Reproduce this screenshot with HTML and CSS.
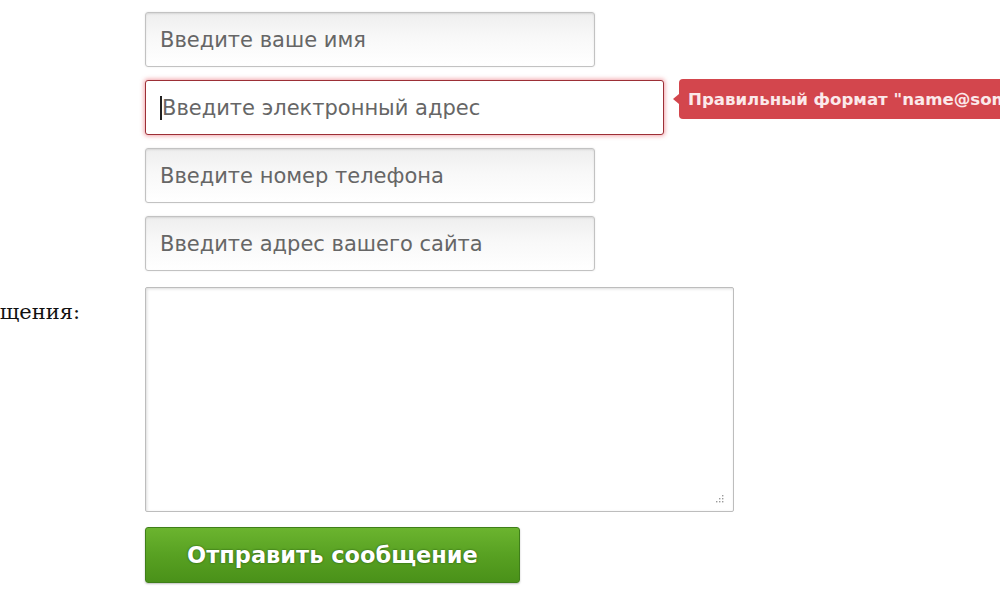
FILE: index.html
```html
<!DOCTYPE html>
<html lang="ru">
<head>
<meta charset="utf-8">
<title>Форма</title>
<link rel="stylesheet" href="styles.css">
</head>
<body>
<form class="form">
  <div class="row">
    <div class="label"></div>
    <div class="field"><input class="input w450" type="text" placeholder="Введите ваше имя"></div>
  </div>
  <div class="row">
    <div class="label"></div>
    <div class="field">
      <div class="input w519 error"><span class="caret"></span><span class="ph">Введите электронный адрес</span></div>
      <div class="tip">Правильный формат "name@something.com"</div>
    </div>
  </div>
  <div class="row">
    <div class="label"></div>
    <div class="field"><input class="input w450" type="text" placeholder="Введите номер телефона"></div>
  </div>
  <div class="row">
    <div class="label"></div>
    <div class="field"><input class="input w450" type="text" placeholder="Введите адрес вашего сайта"></div>
  </div>
  <div class="row row-text">
    <div class="label label-text"><span>Текст сообщения:</span></div>
    <div class="field field-area">
      <textarea class="area"></textarea>
      <svg class="grip" width="9" height="9" viewBox="0 0 9 9" aria-hidden="true">
        <rect x="7" y="1" width="1.4" height="1.4" fill="#9a9a9a"/>
        <rect x="4" y="4" width="1.4" height="1.4" fill="#9a9a9a"/>
        <rect x="7" y="4" width="1.4" height="1.4" fill="#9a9a9a"/>
        <rect x="1" y="7" width="1.4" height="1.4" fill="#9a9a9a"/>
        <rect x="4" y="7" width="1.4" height="1.4" fill="#9a9a9a"/>
        <rect x="7" y="7" width="1.4" height="1.4" fill="#9a9a9a"/>
      </svg>
    </div>
  </div>
  <div class="row row-btn">
    <div class="label"></div>
    <div class="field"><button class="btn" type="button">Отправить сообщение</button></div>
  </div>
</form>
</body>
</html>
```
FILE: styles.css
```css
html, body {
  margin: 0;
  padding: 0;
  background: #ffffff;
  overflow: hidden;
}
.form {
  display: flex;
  flex-direction: column;
  gap: 13px;
  padding-top: 12px;
  width: 1000px;
  height: 600px;
  box-sizing: border-box;
  overflow: hidden;
}
.row {
  display: grid;
  grid-template-columns: 145px 1fr;
}
.row-text { margin-top: 3px; }
.row-btn { margin-top: 2px; }
.label {
  display: flex;
  justify-content: flex-end;
  padding-right: 65px;
  white-space: nowrap;
  font-family: "DejaVu Serif", "Liberation Serif", serif;
  font-size: 21px;
  color: #111;
}
.label-text { padding-top: 13px; align-items: flex-start; }
.field {
  display: flex;
  align-items: center;
  position: relative;
}
.field-area { align-items: flex-start; }
.input {
  box-sizing: border-box;
  height: 55px;
  border: 1px solid #c2c2c2;
  border-radius: 3px;
  background: linear-gradient(#eeeeee, #f8f8f8 45%, #ffffff);
  box-shadow: inset 0 1px 2px rgba(0,0,0,0.10), 0 0 2px rgba(0,0,0,0.10);
  padding: 0 14px;
  font-family: "DejaVu Sans", Verdana, sans-serif;
  font-size: 21px;
  color: #333;
  outline: none;
  margin: 0;
}
.input::placeholder { color: #666666; }
.w450 { width: 450px; }
.w519 { width: 519px; }
.error {
  display: flex;
  align-items: center;
  background: #fff;
  border: 1px solid #9c2f36;
  box-shadow: 0 0 4px 1px rgba(230, 90, 100, 0.55);
}
.caret {
  width: 2px;
  height: 24px;
  background: #222;
}
.ph { color: #666666; }
.tip {
  position: absolute;
  left: 534px;
  top: -1px;
  height: 40px;
  display: flex;
  align-items: center;
  padding: 0 9px;
  background: #d3464d;
  border-radius: 4px;
  color: #fbe9ea;
  font-family: "DejaVu Sans", Verdana, sans-serif;
  font-weight: bold;
  font-size: 16.6px;
  white-space: nowrap;
}
.tip::before {
  content: "";
  position: absolute;
  left: -6px;
  top: 15px;
  border-top: 5px solid transparent;
  border-bottom: 5px solid transparent;
  border-right: 6px solid #d3464d;
}
.area {
  box-sizing: border-box;
  width: 589px;
  height: 225px;
  border: 1px solid #bdbdbd;
  border-radius: 2px;
  background: #fff;
  box-shadow: inset 1px 1px 3px rgba(0,0,0,0.14);
  margin: 0;
  resize: none;
  outline: none;
}
.grip {
  position: absolute;
  left: 570px;
  top: 207px;
}
.btn {
  box-sizing: border-box;
  width: 375px;
  height: 56px;
  border: 1px solid #3f7f19;
  border-radius: 3px;
  background: linear-gradient(#6bb42f, #58a122 50%, #4a9119);
  color: #ffffff;
  font-family: "DejaVu Sans", Verdana, sans-serif;
  font-weight: bold;
  font-size: 22.5px;
  text-shadow: 0 0 2px rgba(0,40,0,0.7);
  box-shadow: 0 1px 2px rgba(0,0,0,0.25);
  margin: 0;
  padding: 0;
}
```
